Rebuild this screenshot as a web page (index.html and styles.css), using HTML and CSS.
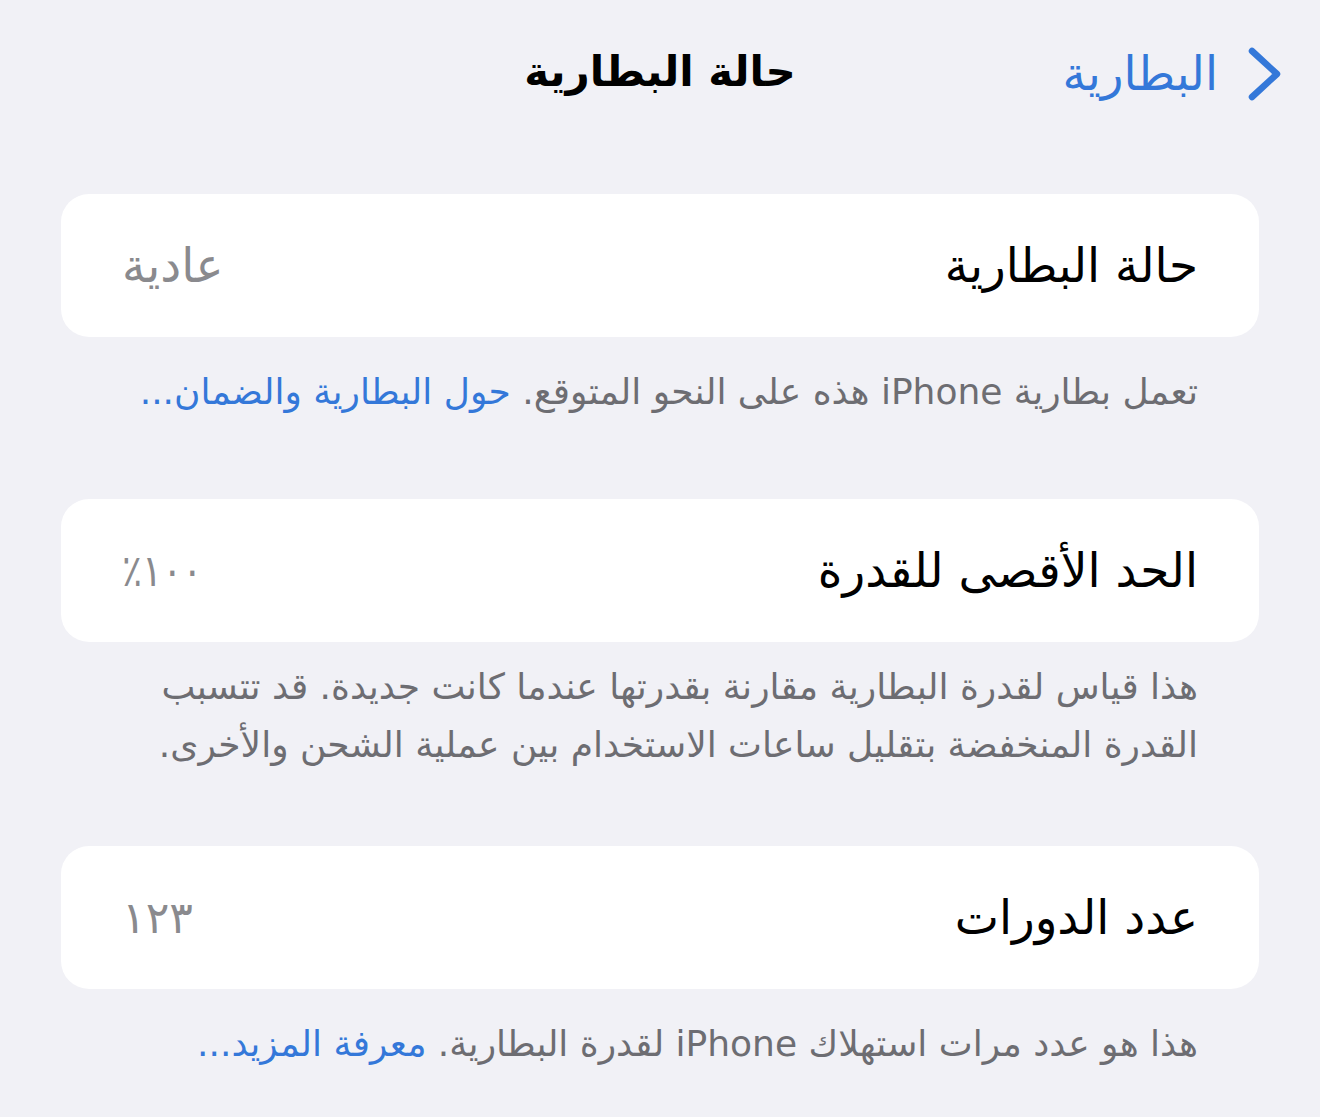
FILE: index.html
```html
<!DOCTYPE html>
<html lang="ar" dir="rtl">
<head>
    <meta charset="UTF-8">
    <meta name="viewport" content="width=device-width, initial-scale=1.0">
    <title>حالة البطارية</title>
    <link rel="stylesheet" href="styles.css">
</head>
<body>
    <div class="nav">
        <a href="#" class="back">
            <svg class="chevron" width="36" height="56" viewBox="0 0 36 56">
                <path d="M5 5 L30 28 L5 51" fill="none" stroke="currentColor" stroke-width="6.5" stroke-linecap="round" stroke-linejoin="round"/>
            </svg>
            <span>البطارية</span>
        </a>
        <h1 class="nav-title">حالة البطارية</h1>
    </div>

    <div class="group">
        <div class="cell">
            <div class="cell-label">حالة البطارية</div>
            <div class="cell-value">عادية</div>
        </div>
        <p class="footer with-link">تعمل بطارية iPhone هذه على النحو المتوقع. <a href="#">حول البطارية والضمان...</a></p>
    </div>

    <div class="group">
        <div class="cell">
            <div class="cell-label">الحد الأقصى للقدرة</div>
            <div class="cell-value num pct">١٠٠٪</div>
        </div>
        <p class="footer">هذا قياس لقدرة البطارية مقارنة بقدرتها عندما كانت جديدة. قد تتسبب القدرة المنخفضة بتقليل ساعات الاستخدام بين عملية الشحن والأخرى.</p>
    </div>

    <div class="group">
        <div class="cell">
            <div class="cell-label">عدد الدورات</div>
            <div class="cell-value num">١٢٣</div>
        </div>
        <p class="footer with-link">هذا هو عدد مرات استهلاك iPhone لقدرة البطارية. <a href="#">معرفة المزيد...</a></p>
    </div>
</body>
</html>
```

FILE: styles.css
```css
body {
    font-family: "DejaVu Sans", "Noto Sans", sans-serif;
    background: #f1f1f6;
    margin: 0;
    padding: 0 61px;
    color: #000;
}
a {
    color: #3478d9;
    text-decoration: none;
}
.nav {
    position: relative;
    height: 194px;
}
.nav-title {
    margin: 0;
    padding-top: 42px;
    text-align: center;
    font-size: 42px;
    font-weight: bold;
    line-height: 60px;
}
.back {
    position: absolute;
    top: 46px;
    right: -24px;
    display: flex;
    align-items: center;
    gap: 29px;
    font-size: 47px;
    line-height: 56px;
}
.chevron {
    display: block;
}
.group {
    margin-bottom: 72px;
}
.cell {
    display: flex;
    justify-content: space-between;
    align-items: center;
    height: 143px;
    padding: 0 61px;
    background: #fff;
    border-radius: 28px;
    font-size: 47px;
}
.cell-value {
    color: #8a8a8e;
}
.cell-value.num {
    font-size: 44px;
}
.cell-value.pct {
    transform: scaleX(0.85);
    transform-origin: left center;
}
.footer {
    margin: 0;
    padding: 16px 61px 0;
    font-size: 36px;
    line-height: 58px;
    color: #6d6d72;
}
.footer.with-link {
    padding-top: 26px;
    padding-bottom: 6px;
}
```
